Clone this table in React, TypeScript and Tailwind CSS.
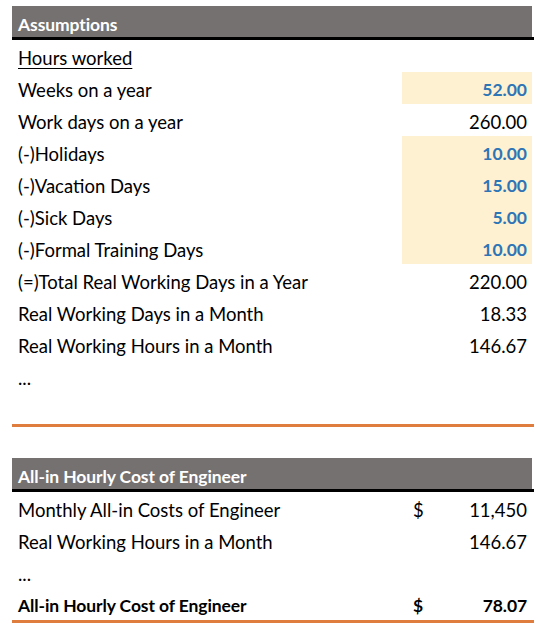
const hours: { label: string; value: string; input?: boolean; underline?: boolean }[] = [
  { label: "Hours worked", value: "", underline: true },
  { label: "Weeks on a year", value: "52.00", input: true },
  { label: "Work days on a year", value: "260.00" },
  { label: "(-)Holidays", value: "10.00", input: true },
  { label: "(-)Vacation Days", value: "15.00", input: true },
  { label: "(-)Sick Days", value: "5.00", input: true },
  { label: "(-)Formal Training Days", value: "10.00", input: true },
  { label: "(=)Total Real Working Days in a Year", value: "220.00" },
  { label: "Real Working Days in a Month", value: "18.33" },
  { label: "Real Working Hours in a Month", value: "146.67" },
  { label: "...", value: "" },
  { label: "", value: "" },
];

function Header({ title }: { title: string }) {
  return (
    <div className="w-[520px] h-[31px] bg-[#757171] flex items-center pt-[8px] px-[6px]">
      <span className="text-white font-bold text-[17.5px] tracking-[-0.1px]">{title}</span>
    </div>
  );
}

export default function App() {
  return (
    <div
      className="pt-[6px] pl-[12px] w-[538px] h-[634px] bg-white text-black"
      style={{ fontFamily: "Lato, 'Open Sans', sans-serif" }}
    >
      <div className="w-[522px]">
        <Header title="Assumptions" />
        <div className="h-[3px] bg-black" />
        {hours.map((row, i) => (
          <div key={i} className="flex h-[32px] items-center text-[18.5px]">
            <div className="flex-1 pl-[6px] pt-[5px]">
              <span className={row.underline ? "underline underline-offset-[3px]" : ""}>{row.label}</span>
            </div>
            <div
              className={`w-[130px] h-full mr-[2px] flex items-center justify-end pt-[5px] pr-[5px] ${
                row.input ? "bg-[#fdf1d2] text-[#2e75b6] font-bold text-[17.5px]" : ""
              }`}
            >
              {row.value}
            </div>
          </div>
        ))}
        <div className="h-[3px] bg-[#df7d3e]" />

        <div className="h-[31px]" />

        <Header title="All-in Hourly Cost of Engineer" />
        <div className="h-[3px] bg-black" />
        <div className="flex h-[32px] items-center pt-[5px] text-[18.5px]">
          <div className="flex-1 pl-[6px]">Monthly All-in Costs of Engineer</div>
          <div className="w-[130px] mr-[2px] flex justify-between pl-[11px] pr-[5px]">
            <span>$</span>
            <span>11,450</span>
          </div>
        </div>
        <div className="flex h-[32px] items-center pt-[5px] text-[18.5px]">
          <div className="flex-1 pl-[6px]">Real Working Hours in a Month</div>
          <div className="w-[130px] mr-[2px] text-right pr-[5px]">146.67</div>
        </div>
        <div className="flex h-[32px] items-center pt-[5px] text-[18.5px]">
          <div className="flex-1 pl-[6px]">...</div>
        </div>
        <div className="flex h-[32px] items-center pt-[5px] text-[17.5px] font-bold tracking-[-0.1px]">
          <div className="flex-1 pl-[6px]">All-in Hourly Cost of Engineer</div>
          <div className="w-[130px] mr-[2px] flex justify-between pl-[11px] pr-[5px]">
            <span>$</span>
            <span>78.07</span>
          </div>
        </div>
        <div className="h-[3px] bg-[#df7d3e]" />
      </div>
    </div>
  );
}
